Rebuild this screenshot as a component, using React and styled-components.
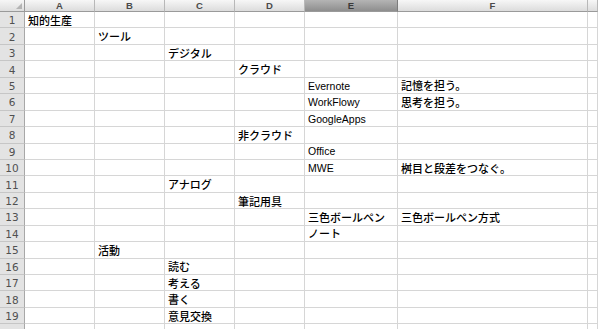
import React from "react";
import styled, { createGlobalStyle } from "styled-components";

const Global = createGlobalStyle`
  html, body { margin: 0; padding: 0; background: #fff; overflow: hidden; }
  #root { width: 598px; height: 329px; overflow: hidden; }
`;

const COLS = ["A", "B", "C", "D", "E", "F", ""];
const ROW_H = 16.44;
const ROWS = 20;

const data = {
  1: { A: "知的生産" },
  2: { B: "ツール" },
  3: { C: "デジタル" },
  4: { D: "クラウド" },
  5: { E: "Evernote", F: "記憶を担う。" },
  6: { E: "WorkFlowy", F: "思考を担う。" },
  7: { E: "GoogleApps" },
  8: { D: "非クラウド" },
  9: { E: "Office" },
  10: { E: "MWE", F: "桝目と段差をつなぐ。" },
  11: { C: "アナログ" },
  12: { D: "筆記用具" },
  13: { E: "三色ボールペン", F: "三色ボールペン方式" },
  14: { E: "ノート" },
  15: { B: "活動" },
  16: { C: "読む" },
  17: { C: "考える" },
  18: { C: "書く" },
  19: { C: "意見交換" },
};

const Sheet = styled.div`
  display: grid;
  grid-template-columns: 25px 70px 70px 70px 70px 93px 190px 1fr;
  grid-template-rows: 12px repeat(${ROWS}, ${ROW_H}px);
  width: 598px;
  font-family: "Liberation Sans", "Noto Sans CJK JP", sans-serif;
`;

const Corner = styled.div`
  position: relative;
  background: linear-gradient(#f6f6f6, #dedede);
  border-right: 1px solid #9a9a9a;
  border-bottom: 1px solid #9a9a9a;
  box-sizing: border-box;
  &::after {
    content: "";
    position: absolute;
    right: 2px;
    bottom: 2px;
    width: 0;
    height: 0;
    border-left: 6px solid transparent;
    border-bottom: 6px solid #b4b4b4;
  }
`;

const ColHead = styled.div`
  display: flex;
  align-items: center;
  justify-content: center;
  box-sizing: border-box;
  font-size: 9.5px;
  font-weight: bold;
  line-height: 1;
  color: ${(p) => (p.$selected ? "#3a3a3a" : "#4a4a4a")};
  background: ${(p) =>
    p.$selected
      ? "linear-gradient(#b4b4b4, #8e8e8e)"
      : "linear-gradient(#f7f7f7, #dcdcdc)"};
  border-right: 1px solid ${(p) => (p.$selected ? "#7c7c7c" : "#b8b8b8")};
  border-bottom: 1px solid #9a9a9a;
`;

const RowHead = styled.div`
  display: flex;
  align-items: center;
  justify-content: center;
  box-sizing: border-box;
  font-family: "DejaVu Sans", "Liberation Sans", sans-serif;
  font-size: 10.5px;
  color: #505050;
  background: #e3e3e3;
  border-right: 1px solid #a8a8a8;
  border-bottom: 1px solid #c6c6c6;
  padding-top: 1px;
`;

const Cell = styled.div`
  display: flex;
  align-items: center;
  box-sizing: border-box;
  padding: 1px 0 0 3px;
  white-space: nowrap;
  overflow: visible;
  border-right: 1px solid #d6d6d6;
  border-bottom: 1px solid #d6d6d6;
  color: #000;
  font-family: ${(p) =>
    p.$latin
      ? `"Liberation Sans", "DejaVu Sans", sans-serif`
      : `"Noto Sans CJK JP", "Liberation Sans", sans-serif`};
  font-size: ${(p) => (p.$latin ? "10.5px" : "11px")};
  font-weight: ${(p) => (p.$latin ? 400 : 500)};
  line-height: 1;
`;

const isLatin = (s) => /^[\x00-\x7f]+$/.test(s);

export default function App() {
  const cells = [];
  cells.push(<Corner key="corner" />);
  COLS.forEach((c, i) =>
    cells.push(
      <ColHead key={"h" + i} $selected={c === "E"}>
        {c}
      </ColHead>
    )
  );
  for (let r = 1; r <= ROWS; r++) {
    cells.push(<RowHead key={"r" + r}>{r}</RowHead>);
    COLS.forEach((c, i) => {
      const v = (data[r] && data[r][c]) || "";
      cells.push(
        <Cell key={r + "-" + i} $latin={v && isLatin(v)}>
          {v}
        </Cell>
      );
    });
  }
  return (
    <>
      <Global />
      <Sheet>{cells}</Sheet>
    </>
  );
}
